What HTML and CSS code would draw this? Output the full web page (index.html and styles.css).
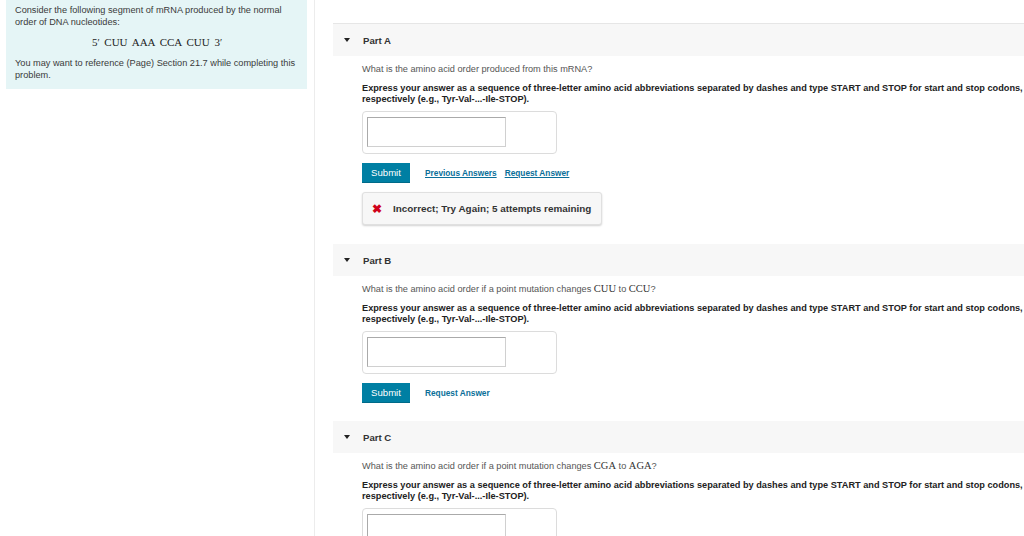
FILE: index.html
```html
<!DOCTYPE html>
<html>
<head>
<meta charset="utf-8">
<link rel="stylesheet" href="styles.css">
</head>
<body>
<div class="page">
  <aside class="sidebar">
    <div class="intro">
      <p class="intro-text">Consider the following segment of mRNA produced by the normal order of DNA nucleotides:</p>
      <p class="math-block">5<span class="prime">′</span> CUU AAA CCA CUU 3<span class="prime">′</span></p>
      <p class="intro-text">You may want to reference (Page) Section 21.7 while completing this problem.</p>
    </div>
  </aside>
  <main class="main">
    <section class="part">
      <div class="part-header first"><span class="caret"></span><span class="part-title">Part A</span></div>
      <div class="part-body">
        <p class="question">What is the amino acid order produced from this mRNA?</p>
        <p class="instructions">Express your answer as a sequence of three-letter amino acid abbreviations separated by dashes and type START and STOP for start and stop codons, respectively (e.g., Tyr-Val-...-Ile-STOP).</p>
        <div class="answer-box"><div class="answer-input"></div></div>
        <div class="actions">
          <span class="submit">Submit</span>
          <span class="link underline">Previous Answers</span>
          <span class="link underline">Request Answer</span>
        </div>
        <div class="feedback"><span class="cross">✖</span><span class="feedback-text">Incorrect; Try Again; 5 attempts remaining</span></div>
      </div>
    </section>
    <section class="part">
      <div class="part-header"><span class="caret"></span><span class="part-title">Part B</span></div>
      <div class="part-body">
        <p class="question">What is the amino acid order if a point mutation changes <span class="math">CUU</span> to <span class="math">CCU</span>?</p>
        <p class="instructions">Express your answer as a sequence of three-letter amino acid abbreviations separated by dashes and type START and STOP for start and stop codons, respectively (e.g., Tyr-Val-...-Ile-STOP).</p>
        <div class="answer-box"><div class="answer-input"></div></div>
        <div class="actions">
          <span class="submit">Submit</span>
          <span class="link">Request Answer</span>
        </div>
      </div>
    </section>
    <section class="part">
      <div class="part-header"><span class="caret"></span><span class="part-title">Part C</span></div>
      <div class="part-body">
        <p class="question">What is the amino acid order if a point mutation changes <span class="math">CGA</span> to <span class="math">AGA</span>?</p>
        <p class="instructions">Express your answer as a sequence of three-letter amino acid abbreviations separated by dashes and type START and STOP for start and stop codons, respectively (e.g., Tyr-Val-...-Ile-STOP).</p>
        <div class="answer-box"><div class="answer-input"></div></div>
      </div>
    </section>
  </main>
</div>
</body>
</html>
```
FILE: styles.css
```css
html, body {
  margin: 0;
  padding: 0;
  background: #fff;
  overflow: hidden;
  width: 1024px;
  height: 536px;
}
body {
  font-family: "Liberation Sans", Arial, sans-serif;
  font-size: 9.2px;
  color: #333;
}
p { margin: 0; }
.page {
  display: flex;
  align-items: stretch;
  min-height: 536px;
}
.sidebar {
  flex: none;
  width: 308px;
  padding-left: 6px;
  border-right: 1px solid #ececec;
  min-height: 536px;
}
.intro {
  width: 284px;
  background: #e5f5f6;
  padding: 4px 8px 8px 9px;
}
.intro-text {
  line-height: 12px;
  color: #3a3a3a;
  font-size: 9.2px;
}
.math-block {
  font-family: "Liberation Serif", "Times New Roman", serif;
  font-size: 11px;
  text-align: center;
  margin: 8px 0 9px;
  word-spacing: 2px;
  color: #222;
}
.prime { font-size: 10px; }
.main {
  flex: none;
  width: 710px;
  padding-left: 18px;
  padding-top: 23px;
}
.part-header {
  height: 32px;
  background: #f7f7f7;
  display: flex;
  align-items: center;
}
.part-header.first {
  border-top: 1px solid #e6e6e6;
}
.caret {
  width: 0;
  height: 0;
  border-left: 3.5px solid transparent;
  border-right: 3.5px solid transparent;
  border-top: 4px solid #222;
  margin-left: 11px;
  margin-right: 13px;
}
.part-title {
  font-weight: bold;
  color: #333;
  font-size: 9.6px;
}
.part-body {
  padding-left: 29px;
  padding-top: 7px;
}
.question {
  color: #555;
  line-height: 12px;
}
.math {
  font-family: "Liberation Serif", "Times New Roman", serif;
  font-size: 10.5px;
  color: #333;
}
.instructions {
  margin-top: 8px;
  font-weight: bold;
  color: #222;
  line-height: 11px;
}
.answer-box {
  margin-top: 6px;
  width: 189px;
  height: 36px;
  border: 1px solid #dcdcdc;
  border-radius: 4px;
  padding: 5px 0 0 4px;
}
.answer-input {
  width: 137px;
  height: 28px;
  border: 1px solid #aaa;
  border-right-color: #d0d0d0;
  border-bottom-color: #d0d0d0;
  background: #fff;
}
.actions {
  margin-top: 9px;
  display: flex;
  align-items: center;
  gap: 8px;
}
.submit {
  display: inline-block;
  background: #007fa3;
  color: #fff;
  width: 48px;
  height: 19px;
  line-height: 19px;
  text-align: center;
  font-size: 9.6px;
  border-bottom: 1px solid #006a88;
  margin-right: 7px;
}
.link {
  color: #0a6f99;
  font-weight: bold;
  font-size: 8.3px;
}
.link.underline {
  text-decoration: underline;
}
.feedback {
  margin-top: 9px;
  width: 238px;
  height: 31px;
  background: #f7f7f7;
  border: 1px solid #e0e0e0;
  border-radius: 3px;
  box-shadow: 0 1px 2px rgba(0,0,0,0.18);
  display: flex;
  align-items: center;
  margin-bottom: 19px;
}
.cross {
  color: #d0021b;
  font-size: 12px;
  font-weight: bold;
  margin-left: 9px;
  margin-right: 11px;
}
.feedback-text {
  font-weight: bold;
  color: #333;
  font-size: 9.9px;
}
.part + .part { margin-top: 18px; }
.part:nth-child(2) { margin-top: 0; }
```
